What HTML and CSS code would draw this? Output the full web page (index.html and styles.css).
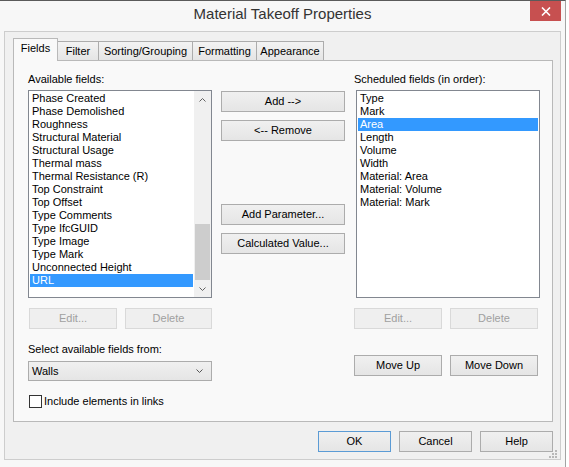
FILE: index.html
```html
<!DOCTYPE html>
<html lang="en">
<head>
<meta charset="utf-8">
<title>Material Takeoff Properties</title>
<link rel="stylesheet" href="styles.css">
</head>
<body>
<div class="window">
  <div class="titlebar">
    <h1 class="title">Material Takeoff Properties</h1>
    <button class="close" aria-label="Close">
      <svg width="10" height="9" viewBox="0 0 10 9"><path d="M1 0.5 L9 8.5 M9 0.5 L1 8.5" stroke="#fff" stroke-width="1.6" fill="none"/></svg>
    </button>
  </div>
  <div class="client">
    <div class="tabs">
      <div class="tab selected tab-fields">Fields</div>
      <div class="tab tab-filter">Filter</div>
      <div class="tab tab-sorting">Sorting/Grouping</div>
      <div class="tab tab-formatting">Formatting</div>
      <div class="tab tab-appearance">Appearance</div>
    </div>
    <div class="panel">
      <div class="col col-left">
        <div class="label">Available fields:</div>
        <div class="listbox">
          <ul class="items">
            <li>Phase Created</li>
            <li>Phase Demolished</li>
            <li>Roughness</li>
            <li>Structural Material</li>
            <li>Structural Usage</li>
            <li>Thermal mass</li>
            <li>Thermal Resistance (R)</li>
            <li>Top Constraint</li>
            <li>Top Offset</li>
            <li>Type Comments</li>
            <li>Type IfcGUID</li>
            <li>Type Image</li>
            <li>Type Mark</li>
            <li>Unconnected Height</li>
            <li class="sel">URL</li>
          </ul>
          <div class="scrollbar">
            <div class="sb-btn"><svg width="7" height="4" viewBox="0 0 7 4"><path d="M0.5 3.5 L3.5 0.5 L6.5 3.5" stroke="#606060" fill="none"/></svg></div>
            <div class="sb-track"><div class="sb-thumb"></div></div>
            <div class="sb-btn"><svg width="7" height="4" viewBox="0 0 7 4"><path d="M0.5 0.5 L3.5 3.5 L6.5 0.5" stroke="#606060" fill="none"/></svg></div>
          </div>
        </div>
        <div class="btnrow btnrow-left">
          <button class="btn btn-edit" disabled>Edit...</button>
          <button class="btn btn-delete" disabled>Delete</button>
        </div>
        <div class="label select-label">Select available fields from:</div>
        <div class="select">
          <span>Walls</span>
          <svg width="7" height="4" viewBox="0 0 7 4"><path d="M0.5 0.5 L3.5 3.5 L6.5 0.5" stroke="#555" fill="none"/></svg>
        </div>
        <label class="check"><span class="box"></span><span>Include elements in links</span></label>
      </div>
      <div class="col col-middle">
        <button class="btn btn-mid">Add --&gt;</button>
        <button class="btn btn-mid">&lt;-- Remove</button>
        <button class="btn btn-mid btn-param">Add Parameter...</button>
        <button class="btn btn-mid">Calculated Value...</button>
      </div>
      <div class="col col-right">
        <div class="label">Scheduled fields (in order):</div>
        <div class="listbox listbox-right">
          <ul class="items">
            <li>Type</li>
            <li>Mark</li>
            <li class="sel">Area</li>
            <li>Length</li>
            <li>Volume</li>
            <li>Width</li>
            <li>Material: Area</li>
            <li>Material: Volume</li>
            <li>Material: Mark</li>
          </ul>
        </div>
        <div class="btnrow">
          <button class="btn btn-half" disabled>Edit...</button>
          <button class="btn btn-half" disabled>Delete</button>
        </div>
        <div class="btnrow btnrow-move">
          <button class="btn btn-half">Move Up</button>
          <button class="btn btn-half">Move Down</button>
        </div>
      </div>
    </div>
    <div class="footer">
      <button class="btn btn-foot btn-default">OK</button>
      <button class="btn btn-foot">Cancel</button>
      <button class="btn btn-foot">Help</button>
    </div>
    <svg class="grip" width="8" height="8" viewBox="0 0 8 8">
      <rect x="6" y="0" width="2" height="2" fill="#b8b8b8"/>
      <rect x="3" y="3" width="2" height="2" fill="#b8b8b8"/>
      <rect x="6" y="3" width="2" height="2" fill="#b8b8b8"/>
      <rect x="0" y="6" width="2" height="2" fill="#b8b8b8"/>
      <rect x="3" y="6" width="2" height="2" fill="#b8b8b8"/>
      <rect x="6" y="6" width="2" height="2" fill="#b8b8b8"/>
    </svg>
  </div>
</div>
</body>
</html>
```

FILE: styles.css
```css
* { box-sizing: border-box; }
html, body { margin: 0; padding: 0; }
body {
  width: 569px;
  height: 467px;
  overflow: hidden;
  background: #ffffff;
  font-family: "Liberation Sans", Arial, sans-serif;
  font-size: 11px;
  color: #000;
}
.window {
  width: 566px;
  height: 467px;
  background: #f7f7f7;
  border-top: 1px solid #5a5a5a;
  border-right: 1px solid #a3a3a3;
  display: flex;
  flex-direction: column;
}
.titlebar {
  height: 30px;
  flex: none;
  display: grid;
  grid-template-columns: 1fr auto 1fr;
  align-items: start;
}
.title {
  grid-column: 2;
  margin: 0;
  padding-top: 5px;
  font-size: 15px;
  line-height: 15px;
  font-weight: normal;
  color: #333;
  white-space: nowrap;
}
.close {
  grid-column: 3;
  justify-self: end;
  margin-right: 4px;
  width: 31px;
  height: 20px;
  border: none;
  padding: 0;
  background: #c75050;
  display: flex;
  align-items: center;
  justify-content: center;
}
.client {
  position: relative;
  flex: none;
  margin-left: 4px;
  width: 557px;
  height: 429px;
  background: #f0f0f0;
  border: 1px solid #cdcdcd;
  padding: 6px 7px 7px 8px;
  display: flex;
  flex-direction: column;
}
.tabs {
  display: flex;
  align-items: flex-end;
  height: 22px;
  flex: none;
}
.tab {
  height: 19px;
  margin-left: -1px;
  border: 1px solid #acacac;
  border-bottom: none;
  background: linear-gradient(#f3f3f3, #e5e5e5);
  text-align: center;
  padding-top: 3px;
  line-height: 13px;
  white-space: nowrap;
}
.tab.selected {
  position: relative;
  z-index: 1;
  height: 23px;
  margin-left: 0;
  margin-bottom: -1px;
  border-color: #b9b9b9;
  background: #f9f9f9;
  padding-top: 3px;
}
.tab-fields { width: 45px; }
.tab-filter { width: 42px; }
.tab-sorting { width: 95px; }
.tab-formatting { width: 65px; }
.tab-appearance { width: 68px; }

.panel {
  height: 362px;
  flex: none;
  border: 1px solid #b9b9b9;
  background: #f9f9f9;
  padding: 11px 0 0 14px;
  display: grid;
  grid-template-columns: 184px 124px 186px;
  column-gap: 9px;
  align-items: start;
}
.col { display: flex; flex-direction: column; }
.label { line-height: 14px; height: 14px; white-space: nowrap; }

.listbox {
  margin-top: 4px;
  height: 208px;
  border: 1px solid #828790;
  background: #fff;
  display: flex;
}
.listbox-right { margin-left: 2px; width: 184px; }
.items {
  flex: 1;
  list-style: none;
  margin: 0;
  padding: 1px 0 0;
}
.items li {
  height: 13px;
  line-height: 13px;
  margin: 0 1px;
  padding-left: 2px;
  white-space: nowrap;
}
.items li.sel { background: #3399ff; color: #fff; }
.scrollbar {
  width: 17px;
  flex: none;
  background: #f0f0f0;
  display: flex;
  flex-direction: column;
}
.sb-btn {
  height: 17px;
  flex: none;
  display: flex;
  align-items: center;
  justify-content: center;
}
.sb-track {
  flex: 1;
  display: flex;
  flex-direction: column;
  justify-content: flex-end;
}
.sb-thumb { height: 56px; margin: 0 1px; background: #cdcdcd; }

.btn {
  font: inherit;
  color: #000;
  height: 21px;
  padding: 0;
  border: 1px solid #acacac;
  background: linear-gradient(#f0f0f0, #e5e5e5);
  line-height: 19px;
  text-align: center;
  white-space: nowrap;
}
.btn:disabled {
  color: #a0a0a0;
  border-color: #d9d9d9;
  background: #efefef;
}
.btnrow { margin-top: 10px; display: flex; gap: 8px; }
.btnrow-left { padding-left: 1px; }
.btn-edit { width: 88px; }
.btn-delete { width: 87px; }
.btn-half { width: 88px; }
.btnrow-move { margin-top: 26px; }

.select-label { margin-top: 13px; }
.select {
  margin-top: 5px;
  height: 20px;
  border: 1px solid #acacac;
  background: linear-gradient(#f0f0f0, #e5e5e5);
  display: flex;
  align-items: center;
  justify-content: space-between;
  padding: 0 8px 0 3px;
}
.check {
  margin-top: 13px;
  height: 14px;
  display: flex;
  align-items: center;
  gap: 2px;
  padding-left: 1px;
  white-space: nowrap;
}
.box {
  width: 13px;
  height: 13px;
  border: 1px solid #333;
  background: #fff;
}

.col-middle { padding-top: 19px; gap: 8px; }
.btn-mid { width: 124px; }
.btn-param { margin-top: 55px; }

.footer {
  margin-top: 9px;
  display: flex;
  justify-content: flex-end;
  gap: 8px;
}
.btn-foot { width: 73px; }
.btn-default { border-color: #5b9bd5; }
.grip { position: absolute; right: 3px; bottom: 1px; }
```
